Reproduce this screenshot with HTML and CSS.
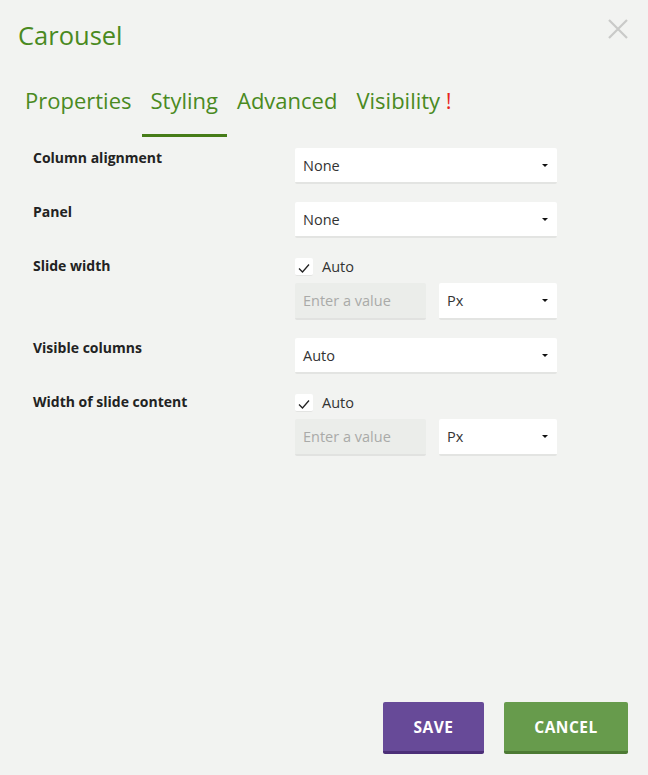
FILE: index.html
```html
<!DOCTYPE html>
<html>
<head>
<meta charset="utf-8">
<link rel="stylesheet" href="styles.css">
</head>
<body>
<div class="dialog">
  <div class="header">
    <h1 class="title">Carousel</h1>
    <button class="close" aria-label="Close">
      <svg width="20" height="20" viewBox="0 0 20 20"><path d="M1 1L19 19M19 1L1 19" stroke="#c9cac8" stroke-width="2.2" fill="none"/></svg>
    </button>
  </div>
  <div class="tabs">
    <div class="tab">Properties</div>
    <div class="tab active">Styling</div>
    <div class="tab">Advanced</div>
    <div class="tab">Visibility <span class="warn">!</span></div>
  </div>
  <div class="form">
    <div class="label">Column alignment</div>
    <div class="control"><div class="select wide">None<span class="caret"></span></div></div>

    <div class="label">Panel</div>
    <div class="control"><div class="select wide">None<span class="caret"></span></div></div>

    <div class="label">Slide width</div>
    <div class="control">
      <div class="check-row"><span class="checkbox"><svg width="12" height="10" viewBox="0 0 12 10"><path d="M1 5.5L4.5 9L11 1.5" stroke="#222" stroke-width="1.3" fill="none"/></svg></span>Auto</div>
      <div class="pair">
        <div class="input">Enter a value</div>
        <div class="select unit">Px<span class="caret"></span></div>
      </div>
    </div>

    <div class="label">Visible columns</div>
    <div class="control"><div class="select wide">Auto<span class="caret"></span></div></div>

    <div class="label">Width of slide content</div>
    <div class="control">
      <div class="check-row"><span class="checkbox"><svg width="12" height="10" viewBox="0 0 12 10"><path d="M1 5.5L4.5 9L11 1.5" stroke="#222" stroke-width="1.3" fill="none"/></svg></span>Auto</div>
      <div class="pair">
        <div class="input">Enter a value</div>
        <div class="select unit">Px<span class="caret"></span></div>
      </div>
    </div>
  </div>
  <div class="footer">
    <button class="btn save">SAVE</button>
    <button class="btn cancel">CANCEL</button>
  </div>
</div>
</body>
</html>
```
FILE: styles.css
```css
html, body {
  margin: 0;
  padding: 0;
  background: #f2f3f1;
}
body {
  font-family: "Open Sans", "Noto Sans", sans-serif;
  color: #222;
}
.dialog {
  height: 775px;
  display: flex;
  flex-direction: column;
  box-sizing: border-box;
}
.header {
  display: flex;
  justify-content: space-between;
  align-items: flex-start;
  padding: 18px 20px 0 18px;
}
.title {
  margin: 0;
  font-weight: 400;
  font-size: 25.5px;
  line-height: 34px;
  color: #4a8a1f;
}
.close {
  border: 0;
  background: none;
  padding: 0;
  margin-top: 1px;
  width: 20px;
  height: 20px;
}
.tabs {
  display: flex;
  gap: 1px;
  padding-left: 16px;
  margin-top: 34px;
}
.tab {
  padding: 0 9px 20px;
  font-size: 22px;
  line-height: 28px;
  color: #4a8a1f;
  border-bottom: 3px solid transparent;
}
.tab.active {
  border-bottom-color: #467c18;
}
.warn {
  color: #e8231c;
}
.form {
  display: grid;
  grid-template-columns: 262px 262px;
  column-gap: 0;
  row-gap: 18px;
  padding-left: 33px;
  margin-top: 11px;
}
.label {
  font-weight: 700;
  font-size: 14px;
  line-height: 20px;
  padding-top: 0;
  color: #222;
}
.control {
  display: flex;
  flex-direction: column;
  gap: 6px;
}
.select {
  position: relative;
  background: #fff;
  height: 36px;
  box-sizing: border-box;
  padding: 0 8px;
  font-size: 14.5px;
  line-height: 36px;
  color: #333;
  border-bottom: 2px solid #e3e4e2;
  border-radius: 2px;
}
.caret {
  position: absolute;
  right: 9px;
  top: 16px;
  width: 0;
  height: 0;
  border-left: 3px solid transparent;
  border-right: 3px solid transparent;
  border-top: 3px solid #111;
}
.check-row {
  display: flex;
  align-items: center;
  gap: 9px;
  font-size: 14.5px;
  line-height: 21px;
  color: #333;
  height: 21px;
}
.checkbox {
  width: 18px;
  height: 18px;
  background: #fff;
  border-bottom: 1px solid #e3e4e2;
  border-radius: 2px;
  display: flex;
  align-items: center;
  justify-content: center;
  box-sizing: border-box;
  padding-top: 3px;
}
.pair {
  display: flex;
  gap: 13px;
}
.input {
  width: 131px;
  height: 37px;
  box-sizing: border-box;
  background: #ebedea;
  border-bottom: 2px solid #e1e2e0;
  border-radius: 2px;
  padding: 0 8px;
  font-size: 14.5px;
  line-height: 36px;
  color: #a9aaa8;
}
.unit {
  width: 118px;
  height: 37px;
}
.footer {
  margin-top: auto;
  display: flex;
  justify-content: flex-end;
  gap: 20px;
  padding: 0 20px 21px 0;
}
.btn {
  border: 0;
  height: 52px;
  box-sizing: border-box;
  color: #fff;
  font-family: "Open Sans", sans-serif;
  font-weight: 700;
  font-size: 15.5px;
  letter-spacing: 0.5px;
  border-radius: 2px;
  padding: 0;
}
.save {
  width: 101px;
  background: #674a98;
  border-bottom: 3px solid #4c2f78;
}
.cancel {
  width: 124px;
  background: #679b4c;
  border-bottom: 3px solid #4d7a34;
}
```
